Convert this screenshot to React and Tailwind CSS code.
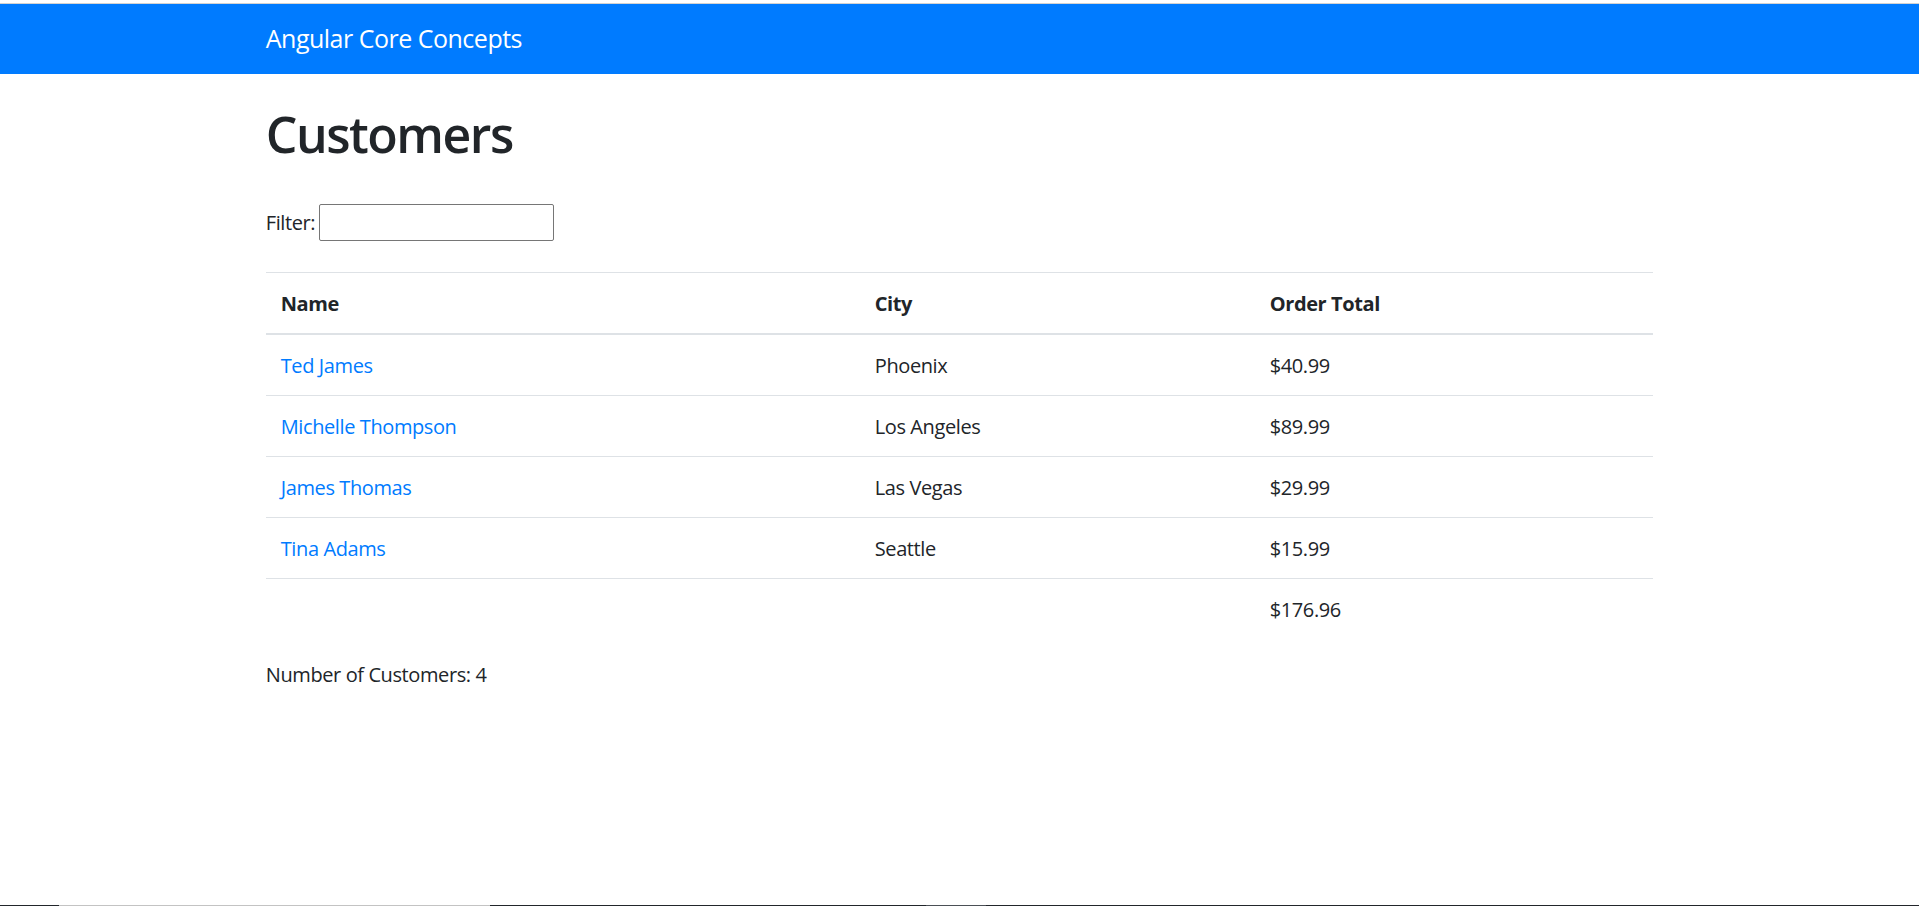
import React, { useState } from 'react';

const customers = [
  { id: 1, name: 'Ted James', city: 'Phoenix', orderTotal: 40.99 },
  { id: 2, name: 'Michelle Thompson', city: 'Los Angeles', orderTotal: 89.99 },
  { id: 3, name: 'James Thomas', city: 'Las Vegas', orderTotal: 29.99 },
  { id: 4, name: 'Tina Adams', city: 'Seattle', orderTotal: 15.99 },
];

const cell = 'px-[15px] pt-[16px] pb-[14px] border-t border-[#dee2e6] text-left align-top';

export default function App() {
  const [filter, setFilter] = useState('');

  const filtered = customers.filter((c) => {
    const f = filter.toLowerCase();
    return !f || c.name.toLowerCase().includes(f) || c.city.toLowerCase().includes(f);
  });
  const total = filtered.reduce((sum, c) => sum + c.orderTotal, 0);

  return (
    <div className="h-[906px] flex flex-col bg-white text-[#212529] font-['Open_Sans','Noto_Sans',sans-serif] text-[20px] leading-[30px] tracking-[-0.4px]">
      <div className="h-[3px] shrink-0" />
      <div className="h-px shrink-0 bg-[#d2d2d2]" />

      {/* Navbar */}
      <nav className="h-[70px] shrink-0 bg-[#007bff] flex items-center">
        <div className="w-[1425px] mx-auto px-[18.75px]">
          <a href="#" className="text-white text-[25px] leading-[37.5px] py-[6.25px] tracking-[-0.5px]">
            Angular Core Concepts
          </a>
        </div>
      </nav>

      <div className="flex-1">
        <div className="w-[1425px] mx-auto px-[18.75px]">
          <h1 className="pt-[30px] pb-[10px] text-[50px] leading-[60px] font-semibold tracking-[-1.5px]">Customers</h1>

          {/* Filter */}
          <div className="mt-[30px] flex items-center h-[37px]">
            <label className="w-[53.5px] shrink-0">Filter:</label>
            <input
              type="text"
              value={filter}
              onChange={(e) => setFilter(e.target.value)}
              className="w-[235px] h-[37px] border border-[#767676] rounded-[2px] px-[2px] outline-none"
            />
          </div>

          {/* Customers table */}
          <table className="mt-[31px] mb-[21px] w-full table-fixed border-collapse">
            <thead>
              <tr>
                <th className={`${cell} w-[594px] font-bold border-b-2`}>Name</th>
                <th className={`${cell} w-[395px] font-bold border-b-2`}>City</th>
                <th className={`${cell} font-bold border-b-2`}>Order Total</th>
              </tr>
            </thead>
            <tbody>
              {filtered.map((c) => (
                <tr key={c.id}>
                  <td className={cell}>
                    <a href="#" className="text-[#007bff]">{c.name}</a>
                  </td>
                  <td className={cell}>{c.city}</td>
                  <td className={cell}>${c.orderTotal.toFixed(2)}</td>
                </tr>
              ))}
              <tr>
                <td className={cell}>&nbsp;</td>
                <td className={cell}>&nbsp;</td>
                <td className={cell}>${total.toFixed(2)}</td>
              </tr>
            </tbody>
          </table>

          <div>Number of Customers: {filtered.length}</div>
        </div>
      </div>

      {/* bottom edge strip */}
      <div className="h-px shrink-0 flex">
        <div className="w-[59px] bg-[#22262b]" />
        <div className="w-[431px] bg-[#c3c3c3]" />
        <div className="w-[436px] bg-[#22262b]" />
        <div className="w-[60px] bg-[#4b5056]" />
        <div className="flex-1 bg-[#22262b]" />
      </div>
    </div>
  );
}
